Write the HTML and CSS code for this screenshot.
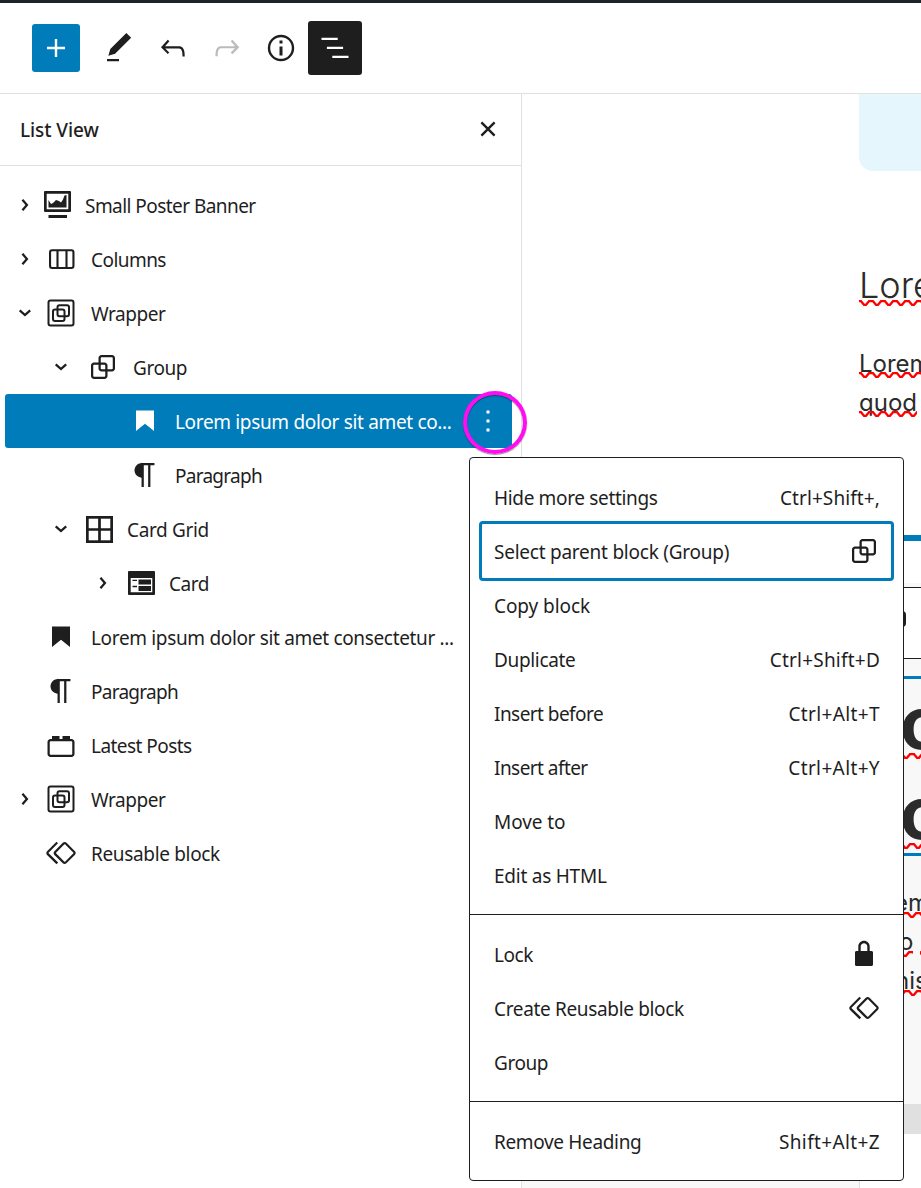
FILE: index.html
```html
<!DOCTYPE html>
<html lang="en">
<head>
<meta charset="utf-8">
<title>Block editor</title>
<link rel="stylesheet" href="styles.css">
</head>
<body>
<svg class="defs" width="0" height="0">
  <symbol id="plus" viewBox="0 0 24 24"><path d="M18 11.200h-5.200V6h-1.600v5.200H6v1.600h5.200V18h1.600v-5.200H18z"/></symbol>
  <symbol id="pencil" viewBox="0 0 24 24"><path d="M20.1 5.1L16.9 2 6.2 12.7l-1.3 4.4 4.5-1.3L20.1 5.1zM4 20.8h8v-1.5H4v1.5z"/></symbol>
  <symbol id="undo" viewBox="0 0 24 24"><path d="M18.3 11.7c-.6-.6-1.4-.9-2.3-.9H6.7l2.9-3.3-1.1-1-4.5 5L8.5 16l1-1-2.7-2.7H16c.5 0 .9.2 1.3.5 1 1 1 3.4 1 4.5v.3h1.5v-.2c0-1.5 0-4.3-1.5-5.7z"/></symbol>
  <symbol id="redo" viewBox="0 0 24 24"><path d="M15.6 6.5l-1.1 1 2.9 3.3H8c-.9 0-1.7.3-2.3.9-1.4 1.5-1.4 4.2-1.4 5.6v.2h1.5v-.3c0-1.1 0-3.5 1-4.5.3-.3.7-.5 1.3-.5h9.2L14.5 15l1.1 1.1 4.6-4.6-4.6-5z"/></symbol>
  <symbol id="info" viewBox="0 0 24 24"><circle cx="12" cy="12" r="8" fill="none" stroke="currentColor" stroke-width="1.6"/><path d="M11 17h2v-6h-2v6zm0-8h2V7h-2v2z"/></symbol>
  <symbol id="list" viewBox="0 0 24 24"><path d="M13.8 5.2H3v1.5h10.8V5.2zm-3.6 12v1.5H21v-1.5H10.2zm7.2-6H6.6v1.5h10.8v-1.5z"/></symbol>
  <symbol id="close" viewBox="0 0 24 24"><path d="M7.600 6.900l8.800 8.800M16.400 6.900l-8.800 8.800" fill="none" stroke="currentColor" stroke-width="1.600"/></symbol>
  <symbol id="chevron" viewBox="0 0 24 24"><path d="M10.86 8.04l3.42 3.99-3.42 3.99-1.14-.98 2.58-3.01-2.58-3.01z"/></symbol>
  <symbol id="poster" viewBox="0 0 36 36"><path fill-rule="evenodd" d="M6 4h25a1 1 0 0 1 1 1v19a1 1 0 0 1-1 1H6a1 1 0 0 1-1-1V5a1 1 0 0 1 1-1zm1.700 2.700v15.600h21.600V6.700zM9.500 13l2.500 4 2-1 3-3 3 1 2 1.500 2-3 1.500-4 2-.5v12.500h-18zM9.500 28h18.500v3H9.500z"/></symbol>
  <symbol id="columns" viewBox="0 0 36 36"><g fill="none" stroke="currentColor" stroke-width="2.100"><rect x="7.050" y="9.300" width="23.400" height="17.700" rx="2"/><path d="M14.500 9v18M23.500 9v18"/></g></symbol>
  <symbol id="wrapper" viewBox="0 0 36 36"><g fill="none" stroke="currentColor" stroke-width="2"><rect x="5.500" y="5.500" width="25" height="25" rx="2"/><rect x="14.500" y="10.300" width="11.500" height="11" rx="2"/><rect x="10" y="14.500" width="11.500" height="11.500" rx="2"/></g></symbol>
  <symbol id="group" viewBox="0 0 24 24"><path d="M18 4h-7c-1.100 0-2 .9-2 2v3H6c-1.100 0-2 .9-2 2v7c0 1.100.9 2 2 2h7c1.100 0 2-.9 2-2v-3h3c1.100 0 2-.9 2-2V6c0-1.100-.9-2-2-2zm-4.500 14c0 .3-.2.500-.5.500H6c-.3 0-.5-.2-.5-.5v-7c0-.3.200-.5.500-.5h3V13c0 1.100.9 2 2 2h2.500v3zm0-4.500H11c-.3 0-.5-.2-.5-.5v-2.500H13c.3 0 .5.200.5.500v2.500zm5-.5c0 .3-.2.500-.5.500h-3V11c0-1.100-.9-2-2-2h-2.500V6c0-.3.200-.5.500-.5h7c.3 0 .5.200.5.500v7z"/></symbol>
  <symbol id="heading" viewBox="0 0 24 24"><path d="M6 5v13.590l6-4.740 6 4.740V5z"/></symbol>
  <symbol id="para" viewBox="0 0 24 24"><path d="M18.300 4H9.900v-.1l-.9.200c-2.300.4-4 2.400-4 4.800s1.700 4.400 4 4.800l.7.100V20h1.500V5.500h2.900V20h1.500V5.500h2.700V4z"/></symbol>
  <symbol id="grid" viewBox="0 0 36 36"><g fill="none" stroke="currentColor" stroke-width="2.700"><rect x="6.350" y="6.350" width="24.300" height="24.300"/><path d="M18.500 6v25M6 18.500h25"/></g></symbol>
  <symbol id="card" viewBox="0 0 36 36"><path fill-rule="evenodd" d="M6 6h25a1 1 0 0 1 1 1v22a1 1 0 0 1-1 1H6a1 1 0 0 1-1-1V7a1 1 0 0 1 1-1zm1.700 7v14.300h21.600V13zM9.500 14.700h4.500v1.300H9.500zM15.500 14.500h12.500v5H15.500zM9.500 20.800h4.500v1.400H9.500zM15.500 21h12.500v5H15.500z"/></symbol>
  <symbol id="block" viewBox="0 0 24 24"><path d="M19 8h-1V6h-5v2h-2V6H6v2H5c-1.100 0-2 .9-2 2v8c0 1.100.9 2 2 2h14c1.100 0 2-.9 2-2v-8c0-1.100-.9-2-2-2zm.5 10c0 .3-.2.500-.5.500H5c-.3 0-.5-.2-.5-.5v-8c0-.3.200-.5.500-.5h14c.3 0 .5.200.5.500v8z"/></symbol>
  <symbol id="reusable" viewBox="0 0 24 24"><path d="M21.300 10.800l-5.600-5.600c-.7-.7-1.800-.7-2.500 0l-5.600 5.600c-.7.7-.7 1.800 0 2.500l5.600 5.600c.3.300.8.500 1.200.5s.9-.2 1.200-.5l5.600-5.600c.8-.7.8-1.900.1-2.500zm-1 1.400l-5.600 5.600c-.1.100-.3.100-.4 0l-5.600-5.600c-.1-.1-.1-.3 0-.4l5.600-5.600s.1-.1.200-.1.100 0 .2.100l5.600 5.600c.1.100.1.300 0 .4zm-16.600-.4L10 5.500l-1-1-6.300 6.300c-.7.7-.7 1.800 0 2.500L9 19.500l1.100-1.100-6.300-6.300c-.2 0-.2-.2-.1-.3z"/></symbol>
  <symbol id="lock" viewBox="0 0 24 24"><path d="M17 10h-1.200V7c0-2.100-1.700-3.800-3.800-3.800S8.200 4.900 8.200 7v3H7c-.6 0-1 .4-1 1v8c0 .6.4 1 1 1h10c.6 0 1-.4 1-1v-8c0-.6-.4-1-1-1zm-2.800 0H9.800V7c0-1.200 1-2.200 2.200-2.200s2.200 1 2.200 2.200v3z"/></symbol>
  <symbol id="more" viewBox="0 0 24 24"><path d="M11 5h2v2h-2zM11 11h2v2h-2zM11 17h2v2h-2z"/></symbol>
  <pattern id="wave" width="12" height="6" patternUnits="userSpaceOnUse"><path d="M-2 1.200H2L5 4.800H7L10 1.200H14" fill="none" stroke="#f00" stroke-width="2.200"/></pattern>
</svg>
<div class="editor">
  <header class="topbar">
    <button class="tool add"><svg class="icon"><use href="#plus"/></svg></button>
    <button class="tool first"><svg class="icon"><use href="#pencil"/></svg></button>
    <button class="tool"><svg class="icon"><use href="#undo"/></svg></button>
    <button class="tool off"><svg class="icon"><use href="#redo"/></svg></button>
    <button class="tool"><svg class="icon"><use href="#info"/></svg></button>
    <button class="tool pressed"><svg class="icon"><use href="#list"/></svg></button>
  </header>
  <main class="body">
    <aside class="panel">
      <div class="panel-head"><h2>List View</h2><svg class="icon"><use href="#close"/></svg></div>
      <div class="tree">
        <div class="row"><svg class="icon"><use href="#chevron"/></svg><svg class="icon custom"><use href="#poster"/></svg><span class="snug">Small Poster Banner</span></div>
        <div class="row"><svg class="icon"><use href="#chevron"/></svg><svg class="icon"><use href="#columns"/></svg><span class="snug">Columns</span></div>
        <div class="row"><svg class="icon down"><use href="#chevron"/></svg><svg class="icon"><use href="#wrapper"/></svg><span>Wrapper</span></div>
        <div class="row l2"><svg class="icon down"><use href="#chevron"/></svg><svg class="icon"><use href="#group"/></svg><span>Group</span></div>
        <div class="row l3 selected"><i class="icon"></i><svg class="icon"><use href="#heading"/></svg><span class="roomy">Lorem ipsum dolor sit amet co...</span><svg class="icon more"><use href="#more"/></svg><b class="ring"></b></div>
        <div class="row l3"><i class="icon"></i><svg class="icon"><use href="#para"/></svg><span class="tight">Paragraph</span></div>
        <div class="row l2"><svg class="icon down"><use href="#chevron"/></svg><svg class="icon custom"><use href="#grid"/></svg><span class="roomy">Card Grid</span></div>
        <div class="row l3"><svg class="icon"><use href="#chevron"/></svg><svg class="icon custom"><use href="#card"/></svg><span>Card</span></div>
        <div class="row"><i class="icon"></i><svg class="icon"><use href="#heading"/></svg><span class="roomy">Lorem ipsum dolor sit amet consectetur ...</span></div>
        <div class="row"><i class="icon"></i><svg class="icon"><use href="#para"/></svg><span class="tight">Paragraph</span></div>
        <div class="row"><i class="icon"></i><svg class="icon"><use href="#block"/></svg><span class="snug">Latest Posts</span></div>
        <div class="row"><svg class="icon"><use href="#chevron"/></svg><svg class="icon"><use href="#wrapper"/></svg><span>Wrapper</span></div>
        <div class="row"><i class="icon"></i><svg class="icon"><use href="#reusable"/></svg><span class="roomy">Reusable block</span></div>
      </div>
    </aside>
    <section class="canvas">
      <div class="hero"></div>
      <div class="line title">Lorem<svg class="wave"><rect width="100" height="6" fill="url(#wave)"/></svg></div>
      <div class="line text">Lorem<svg class="wave"><rect width="100" height="6" fill="url(#wave)"/></svg></div>
      <div class="line text">quod<svg class="wave"><rect width="58" height="6" fill="url(#wave)"/></svg></div>
      <div class="bluebar"></div>
      <div class="gap"></div>
      <div class="blocktools"><i></i></div>
      <div class="block">
        <div class="line big">o<svg class="wave"><rect width="100" height="6" fill="url(#wave)"/></svg></div>
        <div class="line big">o<svg class="wave"><rect width="100" height="6" fill="url(#wave)"/></svg></div>
      </div>
      <div class="copy">
        <div class="line text c1">em<svg class="wave"><rect width="100" height="6" fill="url(#wave)"/></svg></div>
        <div class="line text c2">o .<svg class="wave"><rect width="14" height="6" fill="url(#wave)"/><rect x="21" width="12" height="6" fill="url(#wave)"/></svg></div>
        <div class="line text c3">nis<svg class="wave"><rect width="100" height="6" fill="url(#wave)"/></svg></div>
      </div>
      <div class="graybar"></div>
      <div class="foot"></div>
    </section>
  </main>
  <nav class="menu">
    <div class="section">
      <div class="item"><span class="roomy">Hide more settings</span><span class="key comma">Ctrl+Shift+,</span></div>
      <div class="item focus"><span class="wide">Select parent block (Group)</span><svg class="icon"><use href="#group"/></svg></div>
      <div class="item"><span class="wider">Copy block</span></div>
      <div class="item"><span class="roomy">Duplicate</span><span class="key">Ctrl+Shift+D</span></div>
      <div class="item"><span class="snug">Insert before</span><span class="key alt">Ctrl+Alt+T</span></div>
      <div class="item"><span class="snug">Insert after</span><span class="key alt">Ctrl+Alt+Y</span></div>
      <div class="item"><span class="wider">Move to</span></div>
      <div class="item"><span class="wide">Edit as HTML</span></div>
    </div>
    <div class="section">
      <div class="item"><span>Lock</span><svg class="icon"><use href="#lock"/></svg></div>
      <div class="item"><span class="roomy">Create Reusable block</span><svg class="icon"><use href="#reusable"/></svg></div>
      <div class="item"><span>Group</span></div>
    </div>
    <div class="section">
      <div class="item"><span class="roomy">Remove Heading</span><span class="key alt">Shift+Alt+Z</span></div>
    </div>
  </nav>
</div>
</body>
</html>
```

FILE: styles.css
```css
* { box-sizing: border-box; }
body { margin: 0; background: #fff; color: #1e1e1e; font-family: "Noto Sans", sans-serif; font-size: 19px; letter-spacing: -0.45px; }
.defs { position: absolute; }
.editor { position: relative; width: 921px; height: 1188px; overflow: hidden; display: flex; flex-direction: column; }
.icon { width: 36px; height: 36px; flex: none; fill: currentColor; display: block; }

/* letter fitting */
.tight { letter-spacing: -0.73px; }
.snug { letter-spacing: -0.55px; }
.roomy { letter-spacing: -0.34px; }
.wide { letter-spacing: -0.24px; }
.wider { letter-spacing: -0.08px; }
.key { letter-spacing: 0.22px; }
.comma { letter-spacing: 0.1px; }
.alt { letter-spacing: 0.37px; }

.topbar { height: 94px; flex: none; border-top: 3px solid #1d2327; border-bottom: 1px solid #e0e0e0; padding-left: 32px; display: flex; align-items: center; }
.tool { width: 54px; height: 54px; padding: 0; border: 0; border-radius: 3px; background: none; color: #1e1e1e; display: flex; align-items: center; justify-content: center; }
.add { width: 48px; height: 48px; background: #007cba; color: #fff; }
.first { margin-left: 12px; }
.off { color: #bbb; }
.pressed { background: #1e1e1e; color: #fff; }
.body { flex: 1; display: flex; min-height: 0; }
.panel { width: 522px; flex: none; border-right: 1px solid #e0e0e0; }
.panel-head { height: 72px; border-bottom: 1px solid #e0e0e0; padding: 0 15px 0 20px; display: flex; align-items: center; justify-content: space-between; }
.panel-head h2 { margin: 0; font-size: 19px; font-weight: 500; letter-spacing: -0.08px; }
.tree { padding: 12px 9px 0 5px; }
.row { height: 54px; padding-left: 2px; display: flex; align-items: center; position: relative; border-radius: 3px; }
.row > span { margin-left: 12px; padding-top: 2px; white-space: nowrap; }
.l2 { padding-left: 38px; }
.l3 { padding-left: 80px; }
.l2 .icon + .icon { margin-left: 6px; }
.l3 .icon + .icon { margin-left: 6px; }
.custom { margin-left: -4px; }
.l2 .icon + .custom, .l3 .icon + .custom { margin-left: 2px; }
.row .custom + span { margin-left: 10px; }
.down { transform: rotate(90deg); }
.selected { background: #007cba; color: #fff; }
.more { position: absolute; left: 465px; top: 9px; }
.ring { position: absolute; left: 458px; top: -3px; width: 64px; height: 63px; border: 4px solid #ff0cf0; border-radius: 50%; box-shadow: 0 1px 1px rgba(0,0,0,.45), inset 0 1px 1px rgba(0,0,0,.45); }

.canvas { flex: 1; min-width: 0; overflow: hidden; display: flex; flex-direction: column; color: #2b2b2b; font-family: Inter, sans-serif; letter-spacing: 0; }
.canvas > * { flex: none; }
.hero { height: 77px; margin-left: 337px; background: #e5f7fd; border-bottom-left-radius: 14px; }
.line { position: relative; white-space: nowrap; margin-left: 337px; }
.wave { position: absolute; left: 0; bottom: 0; width: 100px; height: 6px; }
.title { margin-top: 94px; height: 41px; line-height: 41px; font-size: 36px; font-weight: 350; }
.text { font-size: 24px; line-height: 36px; height: 32px; }
.title + .text { margin-top: 40px; }
.text + .text { margin-top: 7px; }
.bluebar { height: 6px; margin-top: 118px; background: #007cba; }
.gap { height: 46px; background: linear-gradient(#fff 42px, #f8f8f8 42px); }
.blocktools { height: 72px; background: #fff; border: solid #1e1e1e; border-width: 1px 0; display: flex; align-items: center; padding: 0 0 8px 374px; }
.blocktools i { width: 10px; height: 16px; border-radius: 4px; background: #1e1e1e; }
.block { height: 197px; padding-top: 17px; background: linear-gradient(#f8f8f8 17px, #007cba 17px, #007cba 20px, #f8f8f8 20px); border-bottom: 3px solid #007cba; }
.big { height: 83px; margin-left: 378px; font-size: 72px; font-weight: 700; line-height: 93px; }
.big + .big { margin-top: 7px; }
.copy { height: 248px; padding-top: 30px; background: #f8f8f8; }
.copy .text { line-height: 34px; }
.c1 { margin-left: 372px; }
.c2 { margin-left: 377px; }
.c3 { margin-left: 373px; }
.graybar { height: 30px; background: #e0e0e0; }
.foot { flex: 1; width: 338px; background: #f8f8f8; border-right: 1px solid #e0e0e0; }

.menu { position: absolute; left: 469px; top: 457px; width: 435px; height: 724px; background: #fff; border: 1px solid #1e1e1e; border-radius: 4px; }
.section { padding: 12px 9px; }
.section + .section { border-top: 1px solid #1e1e1e; }
.item { height: 54px; padding: 0 14px 0 15px; display: flex; align-items: center; justify-content: space-between; white-space: nowrap; }
.item > span { padding-top: 2px; }
.item .icon { margin-right: -2px; }
.focus { height: 60px; margin: -3px 0; border-radius: 4px; box-shadow: inset 0 0 0 3px #007cba; }
```
